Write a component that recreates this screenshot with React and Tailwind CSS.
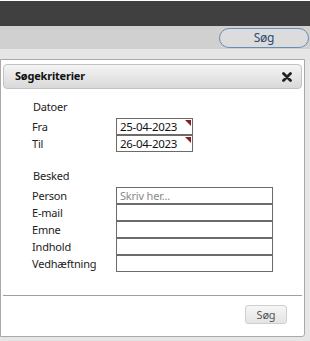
import React from "react";

const font = { fontFamily: '"Noto Sans", "Open Sans", sans-serif' };

function DateField({ value }) {
  return (
    <div className="relative h-[17px] w-[77px] border border-[#6b6b6b] bg-white pl-[3px] text-[11.5px] leading-[15px] tracking-[-0.3px] text-[#111]">
      {value}
      <span className="absolute right-[1px] top-[1px] h-0 w-0 border-l-[6px] border-t-[6px] border-l-transparent border-t-[#8a1c1c]" />
    </div>
  );
}

function TextField({ placeholder }) {
  return (
    <div className="h-[17px] w-[157px] border border-[#6b6b6b] bg-white pl-[3px] text-[11px] leading-[15px] tracking-[-0.2px] text-[#8a8a8a]">
      {placeholder}
    </div>
  );
}

export default function App() {
  const dates = [
    ["Fra", "25-04-2023"],
    ["Til", "26-04-2023"],
  ];
  const fields = ["Person", "E-mail", "Emne", "Indhold", "Vedhæftning"];

  return (
    <div className="h-[341px] w-[310px] overflow-hidden bg-[#e6e6e6] text-[11px] tracking-[-0.2px] text-[#222]" style={font}>
      {/* top bars */}
      <div className="h-[1px] bg-white" />
      <div className="h-[25px] bg-[#404040]" />
      <div className="flex h-[23px] items-center justify-end bg-[#d0d0d0] pr-[1px]">
        <button className="h-[20px] w-[90px] rounded-full border border-[#6a8db5] bg-[#dcdcdc] text-[12px] leading-[18px] text-[#2c4a78]">
          Søg
        </button>
      </div>

      {/* dialog */}
      <div className="ml-0 mt-[10px] h-[278px] w-[305px] rounded-br-[3px] border border-[#a9a9a9] bg-white">
        <div className="mx-[2px] mt-[4px] flex h-[25px] items-center justify-between rounded-[4px] border border-[#c2c2c2] bg-gradient-to-b from-[#f4f4f4] to-[#d9d9d9] pl-[11px] pr-[9px]">
          <span className="text-[11px] font-bold text-[#111]">Søgekriterier</span>
          <svg width="10" height="10" viewBox="0 0 10 10">
            <path d="M1.5 1.5 L8.5 8.5 M8.5 1.5 L1.5 8.5" stroke="#222" strokeWidth="2.8" strokeLinecap="round" />
          </svg>
        </div>

        <div className="flex h-[206px] flex-col pl-[31px] pt-[9px]">
          <div className="pl-[1px] leading-[17px]">Datoer</div>
          <div className="mt-[3px] flex flex-col">
            {dates.map(([label, value]) => (
              <div key={label} className="flex h-[17px] items-center">
                <span className="w-[84px] leading-[17px]">{label}</span>
                <DateField value={value} />
              </div>
            ))}
          </div>

          <div className="mt-[15px] pl-[1px] leading-[17px]">Besked</div>
          <div className="mt-[3px] flex flex-col">
            {fields.map((label, i) => (
              <div key={label} className="flex h-[17px] items-center">
                <span className="w-[84px] leading-[17px]">{label}</span>
                <TextField placeholder={i === 0 ? "Skriv her..." : ""} />
              </div>
            ))}
          </div>
        </div>

        <div className="mx-[2px] border-t border-[#a0a0a0]" />
        <div className="flex justify-end pr-[17px] pt-[9px]">
          <button className="h-[19px] w-[42px] rounded-[3px] border border-[#cfcfcf] bg-gradient-to-b from-[#f6f6f6] to-[#e4e4e4] text-[11px] leading-[17px] text-[#555]">
            Søg
          </button>
        </div>
      </div>
    </div>
  );
}
